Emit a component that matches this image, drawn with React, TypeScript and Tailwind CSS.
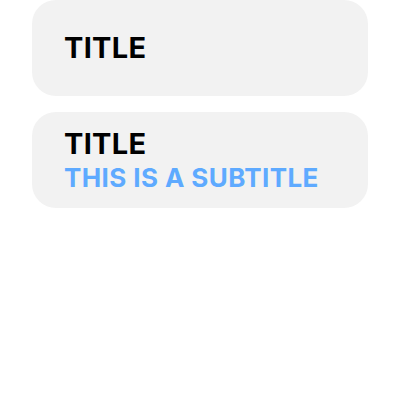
import React from 'react'

type CardProps = {
  title: string
  subtitle?: string
}

const Card = ({ title, subtitle }: CardProps) => {
  return (
    <div className="flex flex-col justify-center h-24 px-8 rounded-[24px] bg-[#f2f2f2]">
      <h2 className="text-[29px] leading-[36px] font-bold tracking-[0.3px] text-black">{title}</h2>
      {subtitle && (
        <p className="text-[26px] leading-[32px] font-bold tracking-[0.4px] text-[#5eaaff]">{subtitle}</p>
      )}
    </div>
  )
}

export default function App() {
  return (
    <div className="w-[400px] h-[400px] bg-white font-['Inter',sans-serif]">
      <div className="flex flex-col gap-4 px-8">
        <Card title="TITLE" />
        <Card title="TITLE" subtitle="THIS IS A SUBTITLE" />
      </div>
    </div>
  )
}
